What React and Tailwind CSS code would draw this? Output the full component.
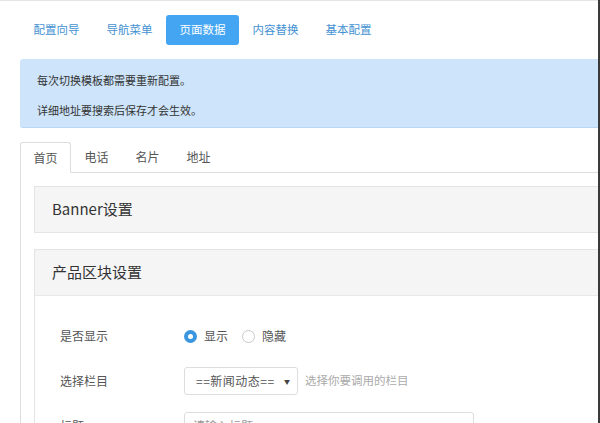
import React from 'react';

const navItems = ['配置向导', '导航菜单', '页面数据', '内容替换', '基本配置'];
const tabs = ['首页', '电话', '名片', '地址'];

const Radio = ({ checked, label }) => (
  <label className="flex items-center gap-[7px] mr-[14px]">
    {checked ? (
      <span className="w-[13px] h-[13px] rounded-full bg-[#3b96e0] flex items-center justify-center">
        <span className="w-[5px] h-[5px] rounded-full bg-white"></span>
      </span>
    ) : (
      <span className="w-[13px] h-[13px] rounded-full border border-[#c9c9c9] bg-white"></span>
    )}
    <span className="text-[12px] text-[#555]">{label}</span>
  </label>
);

const FormRow = ({ label, children }) => (
  <div className="flex items-center h-[28px] mb-[17px]">
    <div className="w-[124px] shrink-0 text-[12px] text-[#555]">{label}</div>
    <div className="flex items-center">{children}</div>
  </div>
);

const App = () => {
  return (
    <div className="w-[600px] h-[423px] overflow-hidden bg-white flex font-['Noto_Sans_CJK_SC','Noto_Sans',sans-serif]">
      <div className="flex-1 min-w-0 border-t border-[#e6e6e6] pl-[20px]">
        {/* top nav */}
        <nav className="flex pt-[14px]">
          {navItems.map((item) => (
            <div
              key={item}
              className={`h-[30px] px-[13.5px] flex items-center text-[11.5px] rounded-[3px] ${
                item === '页面数据' ? 'bg-[#44a6f2] text-white' : 'text-[#4592d2]'
              }`}
            >
              {item}
            </div>
          ))}
        </nav>

        {/* notice */}
        <div className="mt-[14px] bg-[#cde4fa] border-b border-[#b9d6f2] rounded-l-[3px] pl-[17px] pt-[13px] pb-[9px] text-[11px] leading-[16px] text-[#333]">
          <p>每次切换模板都需要重新配置。</p>
          <p className="mt-[14px]">详细地址要搜索后保存才会生效。</p>
        </div>

        {/* tabs */}
        <div className="mt-[14px] flex items-end border-b border-[#dddddd]">
          {tabs.map((tab, idx) => (
            <div
              key={tab}
              className={
                idx === 0
                  ? 'h-[31px] -mb-px w-[51px] flex items-center justify-center text-[12px] text-[#555] bg-white border border-[#dddddd] border-b-transparent rounded-t-[3px]'
                  : 'h-[30px] w-[51px] flex items-center justify-center text-[12px] text-[#555]'
              }
            >
              {tab}
            </div>
          ))}
        </div>

        {/* tab content */}
        <div className="border-l border-[#dddddd] pl-[13px] pt-[13px] h-[260px]">
          <div className="h-[47px] border border-r-0 border-[#e4e4e4] bg-[#f5f5f6] flex items-center pl-[17px] text-[15px] text-[#333]">
            Banner设置
          </div>

          <div className="mt-[16px] border-l border-t border-[#e4e4e4] h-[200px]">
            <div className="h-[46px] bg-[#f5f5f6] border-b border-[#e8e8e8] flex items-center pl-[17px] text-[15px] text-[#333]">
              产品区块设置
            </div>
            <div className="pl-[25px] pt-[26px]">
              <FormRow label="是否显示">
                <Radio checked label="显示" />
                <Radio label="隐藏" />
              </FormRow>
              <FormRow label="选择栏目">
                <div className="w-[114px] h-[28px] border border-[#dddddd] rounded-[3px] flex items-center justify-between pl-[11px] pr-[7px] text-[12px] text-[#555]">
                  <span className="tracking-[0.5px]">==新闻动态==</span>
                  <span className="text-[6px] text-[#444]">▼</span>
                </div>
                <span className="ml-[7px] text-[11.5px] text-[#aaa]">选择你要调用的栏目</span>
              </FormRow>
              <FormRow label="标题">
                <div className="w-[290px] h-[28px] border border-[#dddddd] rounded-[3px] flex items-center pl-[8px] text-[12px] text-[#999]">
                  请输入标题
                </div>
              </FormRow>
            </div>
          </div>
        </div>
      </div>
      <div className="w-[2px] shrink-0 bg-[#3a3a3a]"></div>
    </div>
  );
};

export default App;
